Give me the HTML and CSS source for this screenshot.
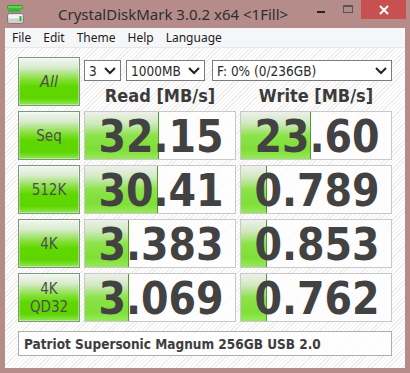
FILE: index.html
```html
<!DOCTYPE html>
<html lang="en">

<head>
  <meta charset="UTF-8">
  <title>CrystalDiskMark 3.0.2 x64</title>
  <link rel="stylesheet" href="styles.css">
</head>

<body>

  <div class="window">

    <!-- title bar -->
    <div class="titlebar">
      <svg class="app-icon" width="17" height="20" viewBox="0 0 17 20">
        <rect x="0.5" y="0.5" width="15" height="3.5" rx="1" fill="#5bd84a" stroke="#2f9a34"/>
        <rect x="1" y="4.5" width="12" height="2.5" fill="#37b53e"/>
        <rect x="0.5" y="8.5" width="16" height="10" rx="2" fill="#cfcfcf" stroke="#7d7d7d"/>
        <rect x="1.5" y="9.5" width="14" height="4" rx="1" fill="#f4f4f4"/>
        <rect x="12.5" y="11" width="2" height="5" fill="#2fb536"/>
      </svg>
      <span class="title">CrystalDiskMark 3.0.2 x64 &lt;1Fill&gt;</span>
      <div class="controls">
        <span class="btn-min"></span>
        <span class="btn-max"></span>
        <span class="btn-close">
          <svg width="10" height="10" viewBox="0 0 10 10">
            <path d="M1 1 L9 9 M9 1 L1 9" stroke="#fff" stroke-width="2"/>
          </svg>
        </span>
      </div>
    </div>

    <!-- menu -->
    <ul class="menu">
      <li>File</li>
      <li>Edit</li>
      <li>Theme</li>
      <li>Help</li>
      <li>Language</li>
    </ul>

    <!-- main area -->
    <div class="client">

      <div class="grid">
        <div class="test-btn all">All</div>

        <div class="top-right">
          <div class="selects">
            <div class="select sel-count">3
              <svg width="12" height="8" viewBox="0 0 12 8"><polyline points="1,1 6,6 11,1" fill="none" stroke="#222" stroke-width="2"/></svg>
            </div>
            <div class="select sel-size">1000MB
              <svg width="12" height="8" viewBox="0 0 12 8"><polyline points="1,1 6,6 11,1" fill="none" stroke="#222" stroke-width="2"/></svg>
            </div>
            <div class="select sel-drive">F: 0% (0/236GB)
              <svg width="12" height="8" viewBox="0 0 12 8"><polyline points="1,1 6,6 11,1" fill="none" stroke="#222" stroke-width="2"/></svg>
            </div>
          </div>
          <div class="heads">
            <div class="head">Read [MB/s]</div>
            <div class="head">Write [MB/s]</div>
          </div>
        </div>

        <div class="test-btn seq">Seq</div>
        <div class="cell"><div class="bar" style="width: 74px"></div><span class="num">32.15</span></div>
        <div class="cell"><div class="bar" style="width: 70px"></div><span class="num">23.60</span></div>

        <div class="test-btn">512K</div>
        <div class="cell"><div class="bar" style="width: 73px"></div><span class="num">30.41</span></div>
        <div class="cell"><div class="bar" style="width: 26px"></div><span class="num">0.789</span></div>

        <div class="test-btn">4K</div>
        <div class="cell"><div class="bar" style="width: 44px"></div><span class="num">3.383</span></div>
        <div class="cell"><div class="bar" style="width: 26px"></div><span class="num">0.853</span></div>

        <div class="test-btn two">4K<br>QD32</div>
        <div class="cell"><div class="bar" style="width: 44px"></div><span class="num">3.069</span></div>
        <div class="cell"><div class="bar" style="width: 26px"></div><span class="num">0.762</span></div>

        <div class="comment">Patriot Supersonic Magnum 256GB USB 2.0</div>
      </div>

    </div>

  </div>

</body>

</html>
```

FILE: styles.css
```css
* {
  margin: 0;
  padding: 0;
  box-sizing: border-box;
}

body {
  background-color: #b58c8a;
}

/* window frame */
.window {
  width: 410px;
  height: 373px;
  background-color: #b58c8a;
  padding: 0 5px 5px 5px;
  display: flex;
  flex-direction: column;
}

/* title bar */
.titlebar {
  height: 28px;
  display: flex;
  align-items: flex-start;
  margin: 0 -5px;
}

.app-icon {
  margin: 5px 0 0 7px;
}

.title {
  margin: 5px 0 0 34px;
  font-family: "Noto Sans", sans-serif;
  font-size: 15px;
  line-height: 18px;
  color: #2e2e2e;
}

.controls {
  margin-left: auto;
  padding-right: 4px;
  display: flex;
  align-items: flex-start;
}

.btn-min {
  width: 8px;
  height: 2px;
  background-color: #222;
  margin-top: 11px;
}

.btn-max {
  width: 10px;
  height: 8px;
  border: 1px solid #555;
  border-top-width: 2px;
  margin: 5px 0 0 18px;
}

.btn-close {
  width: 45px;
  height: 19px;
  background-color: #c75050;
  margin-left: 8px;
  display: flex;
  align-items: center;
  justify-content: center;
}

/* menu */
.menu {
  height: 20px;
  background-color: #f5f6f7;
  list-style: none;
  display: flex;
  padding-left: 1px;
  font-family: "Noto Sans", sans-serif;
  font-size: 12px;
  line-height: 20px;
  color: #1c1c1c;
  border-bottom: 1px solid #e8e8ea;
}

.menu li {
  padding: 0 6px;
}

/* client area with hatch */
.client {
  flex: 1;
  padding: 9px 0 0 13px;
  background-color: #fff;
  background-image: repeating-linear-gradient(135deg, #ffffff 0 2px, #f0eceb 2px 3px);
}

.grid {
  display: grid;
  grid-template-columns: 62px 152px 152px;
  grid-template-rows: 49px 49px 49px 49px 49px 29px;
  column-gap: 4px;
  row-gap: 5px;
}

/* green test buttons */
.test-btn {
  border: 1px solid #7e9783;
  background: linear-gradient(#f3f6f1 0%, #d9ebce 20%, #86e03c 45%, #5fd800 60%, #5ed500 85%, #8fe752 100%);
  box-shadow: inset 0 0 0 1px rgba(255, 255, 255, .35);
  display: flex;
  align-items: center;
  justify-content: center;
  text-align: center;
  font-family: "DejaVu Sans Condensed", "DejaVu Sans", sans-serif;
  font-stretch: condensed;
  font-size: 15px;
  color: #4e4e4e;
}

.test-btn.all {
  font-style: italic;
  font-size: 16px;
}

.test-btn.two {
  line-height: 18px;
  font-size: 15px;
}

/* selects */
.top-right {
  grid-column: 2 / 4;
  display: flex;
  flex-direction: column;
}

.selects {
  display: flex;
  margin-top: 3px;
}

.select {
  height: 21px;
  border: 1px solid #7c7c7c;
  background-color: #fff;
  display: flex;
  align-items: center;
  justify-content: space-between;
  padding: 0 4px 0 4px;
  font-family: "DejaVu Sans Condensed", "DejaVu Sans", sans-serif;
  font-stretch: condensed;
  font-size: 13.5px;
  color: #2a2a2a;
}

.sel-count {
  width: 37px;
}

.sel-size {
  width: 79px;
  margin-left: 5px;
}

.sel-drive {
  width: 180px;
  margin-left: 7px;
}

.heads {
  display: flex;
  gap: 4px;
  margin-top: 5px;
}

.head {
  width: 152px;
  text-align: center;
  font-family: "DejaVu Sans Condensed", "DejaVu Sans", sans-serif;
  font-stretch: condensed;
  font-weight: bold;
  font-size: 18px;
  line-height: 20px;
  color: #3b3b3b;
}

/* result cells */
.cell {
  border: 1px solid #c9c9c9;
  background-color: rgba(255, 255, 255, .7);
  position: relative;
  display: flex;
  align-items: center;
  justify-content: center;
}

.bar {
  position: absolute;
  left: 0;
  top: 0;
  bottom: 0;
  border-right: 1px solid #4f9a2f;
  background: linear-gradient(#eef0ec 0%, #cfe8bd 25%, #8de34a 50%, #7edf36 80%, #97e85a 100%);
}

.num {
  position: relative;
  padding: 2px 0 0 2px;
  font-family: "DejaVu Sans Condensed", "DejaVu Sans", sans-serif;
  font-stretch: condensed;
  font-weight: bold;
  font-size: 44px;
  line-height: 44px;
  color: #424242;
}

/* drive comment */
.comment {
  grid-column: 1 / 4;
  margin-top: 4px;
  border: 1px solid #aeaeae;
  background-color: rgba(255, 255, 255, .8);
  padding-left: 5px;
  display: flex;
  align-items: center;
  font-family: "DejaVu Sans Condensed", "DejaVu Sans", sans-serif;
  font-stretch: condensed;
  font-weight: bold;
  font-size: 13.5px;
  color: #3e3e3e;
}
```
